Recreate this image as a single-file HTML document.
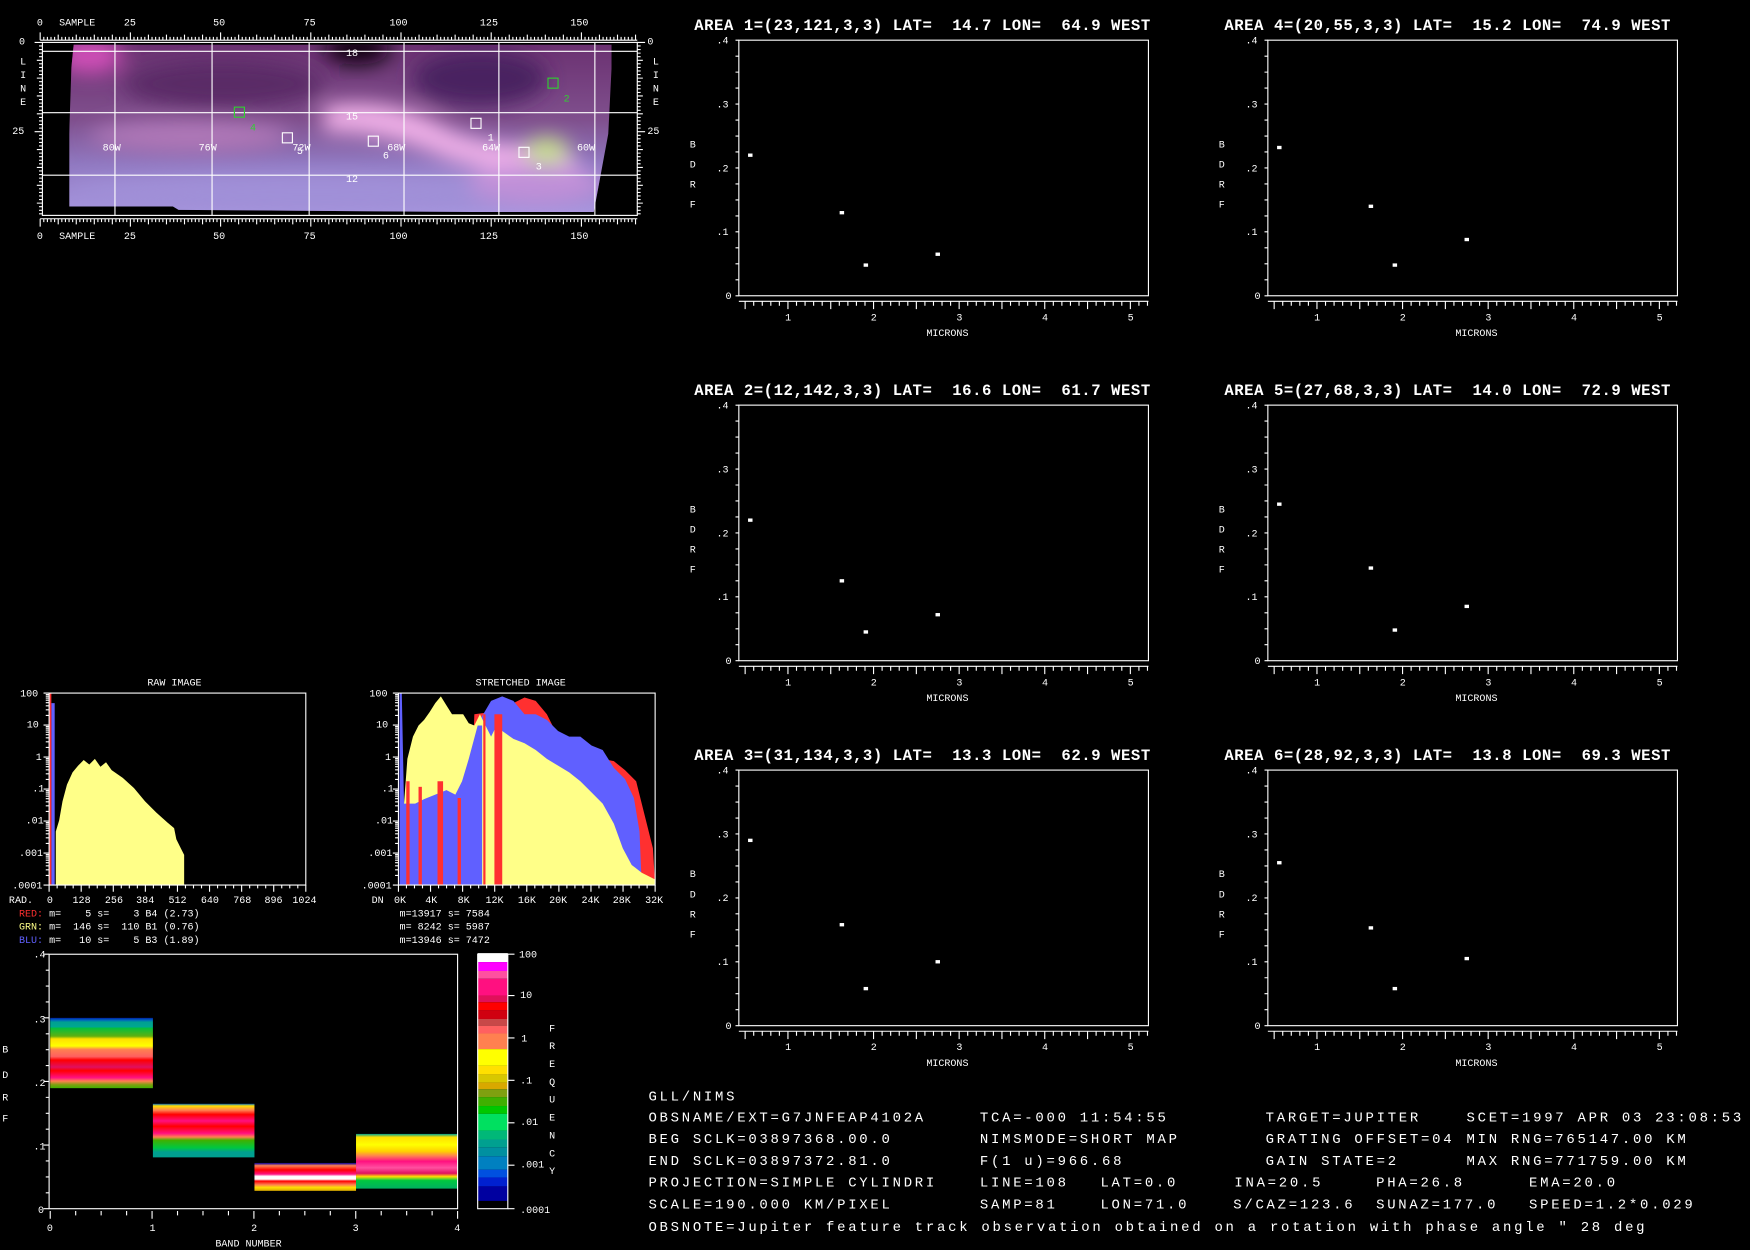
<!DOCTYPE html>
<html><head><meta charset="utf-8">
<style>
html,body{margin:0;padding:0;background:#000;width:1750px;height:1250px;overflow:hidden}
svg{display:block}
text{font-family:"Liberation Mono","DejaVu Sans Mono",monospace;fill:#fff;white-space:pre}
.s{font-size:9px}
.t{font-size:14px;font-weight:bold;letter-spacing:0.5px}
.b{font-size:12.5px;letter-spacing:2.45px}
</style></head><body>
<svg id="sv" width="1750" height="1250" viewBox="0 0 1568 1120" preserveAspectRatio="none" xmlns="http://www.w3.org/2000/svg" xml:space="preserve">
<defs>
<filter id="bl" x="-20%" y="-20%" width="140%" height="140%"><feGaussianBlur stdDeviation="9"/></filter>
<clipPath id="mc"><polygon points="66,40 548,40 548,60 545,120 532,190 430,190 160,188 155,185 62,185 62,120 64,60"/></clipPath>
<linearGradient id="mg" x1="0" y1="0" x2="0" y2="1">
<stop offset="0" stop-color="#6a3070"/><stop offset="0.45" stop-color="#80508e"/><stop offset="0.7" stop-color="#9078c0"/><stop offset="1" stop-color="#a898e0"/></linearGradient>
<linearGradient id="g0" x1="0" y1="0" x2="0" y2="1">
<stop offset="0" stop-color="#0020a0"/><stop offset=".03" stop-color="#0060c0"/><stop offset=".06" stop-color="#00a090"/><stop offset=".14" stop-color="#00a890"/><stop offset=".14" stop-color="#00c040"/><stop offset=".26" stop-color="#60b010"/><stop offset=".3" stop-color="#ffe000"/><stop offset=".4" stop-color="#ffff00"/><stop offset=".45" stop-color="#ff8050"/><stop offset=".55" stop-color="#ff6060"/><stop offset=".6" stop-color="#ff0000"/><stop offset=".7" stop-color="#e01060"/><stop offset=".75" stop-color="#ff0000"/><stop offset=".85" stop-color="#ff1080"/><stop offset=".9" stop-color="#ff8050"/><stop offset=".95" stop-color="#80a010"/><stop offset="1" stop-color="#40b000"/></linearGradient>
<linearGradient id="g1" x1="0" y1="0" x2="0" y2="1">
<stop offset="0" stop-color="#0060c0"/><stop offset=".04" stop-color="#ffe000"/><stop offset=".12" stop-color="#ff8050"/><stop offset=".2" stop-color="#ff0000"/><stop offset=".32" stop-color="#ff1080"/><stop offset=".42" stop-color="#ff0000"/><stop offset=".55" stop-color="#ff1080"/><stop offset=".62" stop-color="#ff8050"/><stop offset=".68" stop-color="#40b000"/><stop offset=".82" stop-color="#00c840"/><stop offset=".9" stop-color="#00a090"/><stop offset="1" stop-color="#00a090"/></linearGradient>
<linearGradient id="g2" x1="0" y1="0" x2="0" y2="1">
<stop offset="0" stop-color="#0000a0"/><stop offset=".1" stop-color="#ff8050"/><stop offset=".25" stop-color="#ff0000"/><stop offset=".4" stop-color="#ff1080"/><stop offset=".48" stop-color="#ffffff"/><stop offset=".58" stop-color="#ffffff"/><stop offset=".65" stop-color="#ff0000"/><stop offset=".78" stop-color="#ff8050"/><stop offset=".88" stop-color="#ffe000"/><stop offset="1" stop-color="#d8a800"/></linearGradient>
<linearGradient id="g3" x1="0" y1="0" x2="0" y2="1">
<stop offset="0" stop-color="#00a090"/><stop offset=".06" stop-color="#ffe000"/><stop offset=".2" stop-color="#ffff00"/><stop offset=".32" stop-color="#ffd000"/><stop offset=".4" stop-color="#ff8050"/><stop offset=".5" stop-color="#ff1080"/><stop offset=".62" stop-color="#ff50a0"/><stop offset=".72" stop-color="#e01060"/><stop offset=".78" stop-color="#ffe000"/><stop offset=".85" stop-color="#00c840"/><stop offset="1" stop-color="#00b060"/></linearGradient>
</defs>

<!-- MAP IMAGE -->
<g clip-path="url(#mc)">
<rect x="60" y="38" width="490" height="155" fill="url(#mg)"/>
<g filter="url(#bl)">
<ellipse cx="80" cy="50" rx="30" ry="16" fill="#d050b8"/>
<ellipse cx="320" cy="44" rx="30" ry="14" fill="#100010"/>
<ellipse cx="430" cy="70" rx="60" ry="25" fill="#4a2060"/>
<ellipse cx="200" cy="75" rx="90" ry="22" fill="#5a2a66"/>
<path d="M290,95 Q350,85 400,115 Q440,135 500,128 L520,150 Q460,162 400,142 Q350,118 290,118 Z" fill="#f0b0e8"/>
<ellipse cx="490" cy="135" rx="20" ry="12" fill="#c8e088"/>
<ellipse cx="170" cy="122" rx="90" ry="14" fill="#b078b8"/>
<ellipse cx="280" cy="172" rx="220" ry="16" fill="#a090d8"/>
<ellipse cx="480" cy="165" rx="60" ry="18" fill="#c090d8"/>
</g>
</g>
<rect x="38" y="38" width="533" height="155" fill="none" stroke="#fff" stroke-width="1"/>
<g stroke="#fff" stroke-width="1">
<line x1="38" y1="46" x2="571" y2="46"/><line x1="38" y1="101" x2="571" y2="101"/><line x1="38" y1="157" x2="571" y2="157"/>
<line x1="103" y1="38" x2="103" y2="193"/><line x1="190" y1="38" x2="190" y2="193"/><line x1="277" y1="38" x2="277" y2="193"/><line x1="362" y1="38" x2="362" y2="193"/><line x1="447" y1="38" x2="447" y2="193"/><line x1="533" y1="38" x2="533" y2="193"/>
</g>
<g fill="none" stroke-width="1">
<rect x="422" y="106" width="9" height="9" stroke="#fff"/>
<rect x="491" y="70" width="9" height="9" stroke="#30d030"/>
<rect x="465" y="132" width="9" height="9" stroke="#fff"/>
<rect x="210" y="96" width="9" height="9" stroke="#30d030"/>
<rect x="253" y="119" width="9" height="9" stroke="#fff"/>
<rect x="330" y="122" width="9" height="9" stroke="#fff"/>
</g>
<g class="s">
<text x="310" y="50">18</text><text x="310" y="107">15</text><text x="310" y="163">12</text>
<text x="92" y="135">80W</text><text x="178" y="135">76W</text><text x="262" y="135">72W</text><text x="347" y="135">68W</text><text x="432" y="135">64W</text><text x="517" y="135">60W</text>
<text x="437" y="126">1</text><text x="505" y="91" style="fill:#30d030">2</text><text x="480" y="152">3</text><text x="224" y="117" style="fill:#30d030">4</text><text x="266" y="138">5</text><text x="343" y="142">6</text>
<text x="33" y="23">0</text><text x="53" y="23">SAMPLE</text><text x="111" y="23">25</text><text x="191" y="23">50</text><text x="272" y="23">75</text><text x="349" y="23">100</text><text x="430" y="23">125</text><text x="511" y="23">150</text>
<text x="33" y="214">0</text><text x="53" y="214">SAMPLE</text><text x="111" y="214">25</text><text x="191" y="214">50</text><text x="272" y="214">75</text><text x="349" y="214">100</text><text x="430" y="214">125</text><text x="511" y="214">150</text>
<text x="17" y="40">0</text><text x="11" y="120">25</text><text x="580" y="40">0</text><text x="580" y="120">25</text>
<text x="18" y="58">L</text><text x="18" y="70">I</text><text x="18" y="82">N</text><text x="18" y="94">E</text>
<text x="585" y="58">L</text><text x="585" y="70">I</text><text x="585" y="82">N</text><text x="585" y="94">E</text>
</g>
<g id="ticks" stroke="#fff" stroke-width="1"></g>

<!-- AREA PLOTS -->
<g id="areas"></g>
<text class="t" x="622" y="27">AREA 1=(23,121,3,3) LAT=  14.7 LON=  64.9 WEST</text>
<text class="t" x="1097" y="27">AREA 4=(20,55,3,3) LAT=  15.2 LON=  74.9 WEST</text>
<text class="t" x="622" y="354">AREA 2=(12,142,3,3) LAT=  16.6 LON=  61.7 WEST</text>
<text class="t" x="1097" y="354">AREA 5=(27,68,3,3) LAT=  14.0 LON=  72.9 WEST</text>
<text class="t" x="622" y="681">AREA 3=(31,134,3,3) LAT=  13.3 LON=  62.9 WEST</text>
<text class="t" x="1097" y="681">AREA 6=(28,92,3,3) LAT=  13.8 LON=  69.3 WEST</text>
<g class="s" id="alabels"></g>

<!-- HISTOGRAMS -->
<text class="s" x="132" y="614">RAW IMAGE</text>
<text class="s" x="426" y="614">STRETCHED IMAGE</text>
<polygon fill="#ffff88" points="50,793 50,745 53,735 56,718 60,703 65,692 70,686 75,681 80,685 85,680 90,687 95,683 100,690 110,697 120,706 130,718 140,728 150,737 156,742 158,752 162,760 165,766 165,793"/>
<rect x="46" y="630" width="3" height="163" fill="#6060ff"/>
<rect x="44" y="621" width="2" height="172" fill="#ff3030"/>
<polygon fill="#ff3030" points="420,793 425,640 440,638 460,630 470,625 480,628 490,640 500,660 510,670 520,682 530,690 540,680 550,682 560,690 570,700 575,720 580,740 585,760 587,793"/>
<polygon fill="#6060ff" points="420,793 420,670 430,645 440,628 450,624 460,628 470,640 480,640 490,645 500,655 510,660 520,660 530,668 540,672 550,688 560,698 568,715 573,745 575,793"/>
<polygon fill="#ffff88" points="360,793 362,720 365,680 370,660 375,650 380,645 385,638 390,630 395,624 400,632 405,640 410,640 415,640 420,648 425,650 430,640 435,650 440,660 445,650 450,655 460,662 470,666 480,672 490,680 500,686 510,692 520,700 530,710 540,720 550,738 558,760 566,775 575,782 587,788 587,793"/>
<polygon fill="#6060ff" points="358,793 358,621 360,621 362,720 372,720 380,716 390,712 400,708 408,712 414,700 420,680 428,650 432,650 432,793"/>
<g fill="#ff3030"><rect x="364" y="700" width="3" height="93"/><rect x="375" y="705" width="3" height="88"/><rect x="392" y="700" width="5" height="93"/><rect x="410" y="715" width="3" height="78"/><rect x="433" y="640" width="2" height="153"/><rect x="443" y="640" width="7" height="153"/></g>
<rect x="44" y="621" width="230" height="172" fill="none" stroke="#fff"/>
<rect x="357" y="621" width="230" height="172" fill="none" stroke="#fff"/>
<g class="s">
<text x="18" y="624">100</text><text x="24" y="652">10</text><text x="32" y="681">1</text><text x="29" y="709">.1</text><text x="23" y="738">.01</text><text x="17" y="767">.001</text><text x="11" y="796">.0001</text>
<text x="331" y="624">100</text><text x="337" y="652">10</text><text x="345" y="681">1</text><text x="342" y="709">.1</text><text x="336" y="738">.01</text><text x="330" y="767">.001</text><text x="324" y="796">.0001</text>
<text x="8" y="809">RAD.</text><text x="42" y="809">0</text><text x="65" y="809">128</text><text x="94" y="809">256</text><text x="122" y="809">384</text><text x="151" y="809">512</text><text x="180" y="809">640</text><text x="209" y="809">768</text><text x="237" y="809">896</text><text x="262" y="809">1024</text>
<text x="333" y="809">DN</text><text x="353" y="809">0K</text><text x="381" y="809">4K</text><text x="410" y="809">8K</text><text x="435" y="809">12K</text><text x="464" y="809">16K</text><text x="492" y="809">20K</text><text x="521" y="809">24K</text><text x="549" y="809">28K</text><text x="578" y="809">32K</text>
<text x="17" y="821"><tspan style="fill:#ff3030">RED:</tspan> m=    5 s=    3 B4 (2.73)</text>
<text x="17" y="833"><tspan style="fill:#ffff88">GRN:</tspan> m=  146 s=  110 B1 (0.76)</text>
<text x="17" y="845"><tspan style="fill:#6060ff">BLU:</tspan> m=   10 s=    5 B3 (1.89)</text>
<text x="358" y="821">m=13917 s= 7584</text>
<text x="358" y="833">m= 8242 s= 5987</text>
<text x="358" y="845">m=13946 s= 7472</text>
</g>

<!-- BAND PLOT -->
<rect x="45" y="912" width="92" height="63" fill="url(#g0)"/>
<rect x="137" y="989" width="91" height="48" fill="url(#g1)"/>
<rect x="228" y="1042" width="91" height="25" fill="url(#g2)"/>
<rect x="319" y="1016" width="91" height="49" fill="url(#g3)"/>
<rect x="44" y="855" width="366" height="228" fill="none" stroke="#fff"/>
<g id="cbar"></g>
<rect x="428" y="855" width="27" height="228" fill="none" stroke="#fff"/>
<g class="s">
<text x="30" y="858">.4</text><text x="30" y="916">.3</text><text x="30" y="973">.2</text><text x="30" y="1030">.1</text><text x="34" y="1087">0</text>
<text x="2" y="943">B</text><text x="2" y="966">D</text><text x="2" y="986">R</text><text x="2" y="1005">F</text>
<text x="42" y="1103">0</text><text x="134" y="1103">1</text><text x="225" y="1103">2</text><text x="316" y="1103">3</text><text x="407" y="1103">4</text>
<text x="193" y="1117">BAND NUMBER</text>
<text x="465" y="858">100</text><text x="466" y="894">10</text><text x="467" y="933">1</text><text x="466" y="971">.1</text><text x="466" y="1008">.01</text><text x="466" y="1046">.001</text><text x="466" y="1087">.0001</text>
<text x="492" y="924">F</text><text x="492" y="940">R</text><text x="492" y="956">E</text><text x="492" y="972">Q</text><text x="492" y="988">U</text><text x="492" y="1004">E</text><text x="492" y="1020">N</text><text x="492" y="1036">C</text><text x="492" y="1052">Y</text>
</g>

<!-- BOTTOM INFO -->
<g class="b">
<text x="581" y="986">GLL/NIMS</text>
<text x="581" y="1005">OBSNAME/EXT=G7JNFEAP4102A</text><text x="878" y="1005">TCA=-000 11:54:55</text><text x="1134" y="1005">TARGET=JUPITER</text><text x="1314" y="1005">SCET=1997 APR 03 23:08:53</text>
<text x="581" y="1024">BEG SCLK=03897368.00.0</text><text x="878" y="1024">NIMSMODE=SHORT MAP</text><text x="1134" y="1024">GRATING OFFSET=04</text><text x="1314" y="1024">MIN RNG=765147.00 KM</text>
<text x="581" y="1044">END SCLK=03897372.81.0</text><text x="878" y="1044">F(1 u)=966.68</text><text x="1134" y="1044">GAIN STATE=2</text><text x="1314" y="1044">MAX RNG=771759.00 KM</text>
<text x="581" y="1063">PROJECTION=SIMPLE CYLINDRI</text><text x="878" y="1063">LINE=108</text><text x="986" y="1063">LAT=0.0</text><text x="1106" y="1063">INA=20.5</text><text x="1233" y="1063">PHA=26.8</text><text x="1370" y="1063">EMA=20.0</text>
<text x="581" y="1083">SCALE=190.000 KM/PIXEL</text><text x="878" y="1083">SAMP=81</text><text x="986" y="1083">LON=71.0</text><text x="1105" y="1083">S/CAZ=123.6</text><text x="1233" y="1083">SUNAZ=177.0</text><text x="1370" y="1083">SPEED=1.2*0.029</text>
<text x="581" y="1103">OBSNOTE=Jupiter feature track observation obtained on a rotation with phase angle " 28 deg</text>
</g>
</svg>
<script>
var NS="http://www.w3.org/2000/svg";
function el(p,t,a){var e=document.createElementNS(NS,t);for(var k in a)e.setAttribute(k,a[k]);p.appendChild(e);return e;}
var tk=document.getElementById('ticks');
var d="";
for(var s=0;s<=165;s++){var x=36+3.233*s;if(x>571)break;var L=(s%25==0)?7:(s%5==0?5:3);d+="M"+x+",36v-"+L+"M"+x+",196v"+L;}
for(var l=0;l<=48;l++){var y=38+3.2*l;if(y>193)break;var L=(l%25==0)?7:(l%5==0?5:3);d+="M38,"+y+"h-"+L+"M571,"+y+"h"+L;}
el(tk,'path',{d:d,fill:'none'});
el(tk,'line',{x1:36,y1:36,x2:571,y2:36});el(tk,'line',{x1:36,y1:196,x2:571,y2:196});
var hd="";
[44,357].forEach(function(fx){for(var dec=0;dec<6;dec++){for(var k=1;k<10;k++){var y=793-28.67*(dec+Math.log10(k));hd+="M"+fx+","+y+"h"+(k==1?-5:-3);}}hd+="M"+fx+",621h-5";
for(var i=0;i<=32;i++){var x=fx+230*i/32;hd+="M"+x+",793v"+(i%4==0?6:3);}});
for(var i=0;i<=16;i++){var v=i*0.025;var y=1083-v*570;hd+="M44,"+y+"h-"+(i%4==0?5:3);}
for(var i=0;i<=16;i++){var x=45+i*91.25/4;hd+="M"+x+",1085v"+(i%4==0?7:4);}
hd+="M455,855h6M455,892h6M455,930h6M455,968h6M455,1006h6M455,1044h6M455,1083h6";
el(tk,'path',{d:hd,fill:'none'});
var cb=document.getElementById('cbar');
var segs=[[854,862,"#ffffff"],[862,870,"#ff00ff"],[870,877,"#ff50a0"],[877,892,"#ff1080"],[892,898,"#e0105a"],[898,905,"#ff0000"],[905,913,"#d00010"],[913,919,"#c84848"],[919,926,"#ff6060"],[926,940,"#ff8050"],[940,955,"#ffff00"],[955,963,"#ffe000"],[963,970,"#d8c800"],[970,976,"#d8a800"],[976,983,"#80a010"],[983,991,"#40b000"],[991,998,"#00c800"],[998,1013,"#00e060"],[1013,1021,"#00b878"],[1021,1028,"#00a090"],[1028,1036,"#0090a0"],[1036,1048,"#0080c0"],[1048,1055,"#0050e0"],[1055,1063,"#0020d0"],[1063,1076,"#0000a0"]];
segs.forEach(function(s){el(cb,'rect',{x:428,y:s[0],width:27,height:s[1]-s[0],fill:s[2]});});
var ag=document.getElementById('areas');
var al=document.getElementById('alabels');
var data=[[662,36,[.22,.13,.048,.065]],[1136,36,[.232,.14,.048,.088]],[662,363,[.22,.125,.045,.072]],[1136,363,[.245,.145,.048,.085]],[662,690,[.29,.158,.058,.1]],[1136,690,[.255,.153,.058,.105]]];
var wl=[0.56,1.63,1.91,2.75];
function txt(x,y,s){var t=el(al,'text',{x:x,y:y});t.textContent=s;}
data.forEach(function(a){var fx=a[0],fy=a[1],W=367,H=229;
el(ag,'rect',{x:fx,y:fy,width:W,height:H,fill:'none',stroke:'#fff'});
var p="";for(var i=0;i<=16;i++){var y=fy+H-i*H/16;p+="M"+fx+","+y+"h-3";}
var X0=fx+44;var sc=76.7;
p+="M"+fx+","+(fy+H+5)+"H"+(fx+W);
for(var v=5;v<=52;v++){var x=X0+(v/10-1)*sc;if(x<fx-0.5||x>fx+W+0.5)continue;var L=(v%5==0)?7:4;p+="M"+x+","+(fy+H+5)+"v"+L;}
el(ag,'path',{d:p,stroke:'#fff',fill:'none'});
a[2].forEach(function(b,i){var x=X0+(wl[i]-1)*sc,y=fy+H-b*H/0.4;el(ag,'rect',{x:x-2,y:y-1.5,width:4,height:3,fill:'#fff'});});
txt(fx-20,fy+3,".4");txt(fx-20,fy+H*0.25+3,".3");txt(fx-20,fy+H*0.5+3,".2");txt(fx-20,fy+H*0.75+3,".1");txt(fx-12,fy+H+3,"0");
txt(fx-44,fy+96,"B");txt(fx-44,fy+114,"D");txt(fx-44,fy+132,"R");txt(fx-44,fy+150,"F");
for(var k=1;k<=5;k++)txt(X0+(k-1)*sc-2.5,fy+H+22,String(k));
txt(fx+168,fy+H+36,"MICRONS");
});
</script>
</body></html>
